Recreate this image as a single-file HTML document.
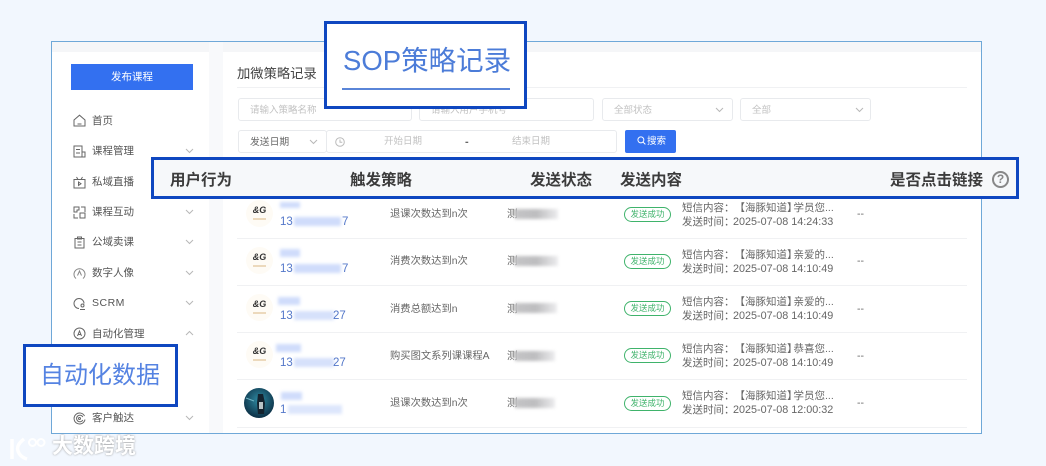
<!DOCTYPE html>
<html lang="zh"><head><meta charset="utf-8"><title>SOP策略记录</title>
<style>
*{box-sizing:border-box;margin:0;padding:0}
html,body{width:1046px;height:466px;overflow:hidden;background:#f2f7fe;font-family:"Liberation Sans","Noto Sans CJK SC",sans-serif;color:#555}
#w{position:absolute;left:0;top:0;width:1046px;height:466px;filter:blur(.35px)}
.a{position:absolute;white-space:nowrap}
.panel{left:51px;top:41px;width:931px;height:393px;border:1px solid #6fa8d8;background:#fff}
.in{position:absolute;background:#fff;border:1px solid #e8eaed;border-radius:3px;font-size:9.5px;color:#c2c2c2;line-height:23px}
.m{position:absolute;left:92px;font-size:10.5px;color:#555;line-height:14px;white-space:nowrap}
.ic{position:absolute;left:73px;width:13px;height:13px;fill:none;stroke:#666;stroke-width:1}
.ch{position:absolute;left:185px;width:9px;height:6px;fill:none;stroke:#b8b8b8;stroke-width:1}
.sep{position:absolute;left:237px;width:730px;height:1px;background:#f0f1f3}
.t{position:absolute;font-size:10.5px;color:#666;line-height:14px;white-space:nowrap;text-spacing-trim:space-all}
.t i{font-style:normal;letter-spacing:-4px}
.t u{text-decoration:none;font-size:10.8px;margin-left:-1.5px}
.ph{position:absolute;left:280px;font-size:11.5px;color:#5377c9;line-height:14px;white-space:nowrap}
.bl{position:absolute;background:#cfdcfb;filter:blur(1.5px)}
.gr{position:absolute;height:10px;left:515px;background:linear-gradient(90deg,#c4c4c6,#bdbdbf 50%,#ececee);filter:blur(1.5px)}
.bd{position:absolute;left:624px;width:47px;height:15px;border:1px solid #3fb36b;border-radius:8px;color:#3fb36b;font-size:8.5px;line-height:13px;text-align:center;white-space:nowrap}
.av{position:absolute;left:246px;width:27px;height:27px;border-radius:50%;background:#fefbf5;text-align:center;font-size:9px;font-weight:bold;font-style:italic;color:#333;line-height:21px}
.av i{position:absolute;left:7px;top:18px;width:13px;height:1.5px;background:#ecd9bc}
.hd{position:absolute;top:172px;font-size:15.5px;font-weight:bold;color:#3c3c3c;line-height:18px;white-space:nowrap}
</style></head><body><div id="w">
<div class="a panel"></div>
<div class="a" style="left:52px;top:42px;width:929px;height:10px;background:#f5f6f8"></div>
<div class="a" style="left:209px;top:42px;width:14px;height:391px;background:#f8f9fb"></div>
<div class="a" style="left:71px;top:64px;width:122px;height:26px;background:#3370f0;color:#fff;font-size:10.5px;line-height:27px;text-align:center">发布课程</div>

<svg class="ic" style="top:114px" viewBox="0 0 13 13"><path d="M1 6L6.5 1.2 12 6v6H1zM4.5 10h4"/></svg><div class="m" style="top:114px">首页</div>
<svg class="ic" style="top:145px" viewBox="0 0 13 13"><path d="M9 12H1V1h8zM3 4.5h4M3 8h4M9 7h3v5H9"/></svg><div class="m" style="top:144px">课程管理</div>
<svg class="ic" style="top:176px" viewBox="0 0 13 13"><path d="M1 3.5h11V12H1zM3.5 1l1.5 2.5M9.5 1L8 3.5M5.5 6l2.500 1.700-2.500 1.700z"/></svg><div class="m" style="top:175px">私域直播</div>
<svg class="ic" style="top:206px" viewBox="0 0 13 13"><path d="M1 1h5v3H4v2H1zM8 1h4v5M1 8v4h4M7 7h5v5H7z"/></svg><div class="m" style="top:205px">课程互动</div>
<svg class="ic" style="top:236px" viewBox="0 0 13 13"><path d="M2 2.5h9V12H2zM4.5 1h4v2h-4zM4.500 6h4M4.500 9h4"/></svg><div class="m" style="top:235px">公域卖课</div>
<svg class="ic" style="top:267px;stroke:#888" viewBox="0 0 13 13"><path d="M3 11.500A5.500 5.500 0 1 1 10 11.500M4.500 8.500L6.500 4l2 4.500"/></svg><div class="m" style="top:266px">数字人像</div>
<svg class="ic" style="top:297px" viewBox="0 0 13 13"><path d="M6 11.500A5 5 0 1 1 11 6.500"/><circle cx="9.500" cy="8.500" r="1.500"/><path d="M7 12.500h5"/></svg><div class="m" style="top:296px;letter-spacing:.5px">SCRM</div>
<svg class="ic" style="top:327px" viewBox="0 0 13 13"><circle cx="6.500" cy="6.500" r="5.500"/><path d="M4.500 9l2-5 2 5M5.200 7.500h2.600"/></svg><div class="m" style="top:327px">自动化管理</div>
<svg class="ic" style="top:412px" viewBox="0 0 13 13"><path d="M11.500 4A5.500 5.500 0 1 0 12 7.500M9.800 5A3.300 3.300 0 1 0 9.800 8"/><circle cx="6.500" cy="6.500" r="1"/></svg><div class="m" style="top:411px">客户触达</div>

<svg class="ch" style="top:148px" viewBox="0 0 9 6"><path d="M1 1l3.500 3.500L8 1"/></svg>
<svg class="ch" style="top:209px" viewBox="0 0 9 6"><path d="M1 1l3.500 3.500L8 1"/></svg>
<svg class="ch" style="top:239px" viewBox="0 0 9 6"><path d="M1 1l3.500 3.500L8 1"/></svg>
<svg class="ch" style="top:270px" viewBox="0 0 9 6"><path d="M1 1l3.500 3.500L8 1"/></svg>
<svg class="ch" style="top:300px" viewBox="0 0 9 6"><path d="M1 1l3.500 3.500L8 1"/></svg>
<svg class="ch" style="top:330px" viewBox="0 0 9 6"><path d="M1 5l3.500-3.500L8 5"/></svg>
<svg class="ch" style="top:415px" viewBox="0 0 9 6"><path d="M1 1l3.500 3.500L8 1"/></svg>

<div class="a" style="left:237px;top:65px;font-size:13.3px;color:#444;line-height:17px">加微策略记录</div>
<div class="sep" style="top:87px"></div>

<div class="in" style="left:238px;top:98px;width:174px;height:23px;padding-left:11px">请输入策略名称</div>
<div class="in" style="left:419px;top:98px;width:175px;height:23px;padding-left:11px">请输入用户手机号</div>
<div class="in" style="left:602px;top:98px;width:131px;height:23px;padding-left:11px">全部状态</div>
<svg class="ch" style="left:715px;top:107px" viewBox="0 0 9 6"><path d="M1 1l3.500 3.500L8 1"/></svg>
<div class="in" style="left:740px;top:98px;width:131px;height:23px;padding-left:11px">全部</div>
<svg class="ch" style="left:855px;top:107px" viewBox="0 0 9 6"><path d="M1 1l3.500 3.500L8 1"/></svg>
<div class="in" style="left:238px;top:130px;width:89px;height:23px;padding-left:11px;color:#666;font-size:9.800px">发送日期</div>
<svg class="ch" style="left:309px;top:139px" viewBox="0 0 9 6"><path d="M1 1l3.500 3.500L8 1"/></svg>
<div class="in" style="left:326px;top:130px;width:291px;height:23px"></div>
<svg class="a" style="left:335px;top:137px;width:10px;height:10px;fill:none;stroke:#bbb" viewBox="0 0 10 10"><circle cx="5" cy="5" r="4.300"/><path d="M5 2.500V5.300H7.300"/></svg>
<div class="a" style="left:384px;top:135px;font-size:9.500px;color:#c2c2c2;line-height:14px">开始日期</div>
<div class="a" style="left:465px;top:135px;font-size:11px;font-weight:bold;color:#666;line-height:14px">-</div>
<div class="a" style="left:512px;top:135px;font-size:9.500px;color:#c2c2c2;line-height:14px">结束日期</div>
<div class="a" style="left:625px;top:130px;width:51px;height:23px;background:#3370f0;border-radius:2px;color:#fff;font-size:9.500px;line-height:24px;padding-left:22px">搜索</div>
<svg class="a" style="left:637px;top:136px;width:9px;height:9px;fill:none;stroke:#fff;stroke-width:1.100" viewBox="0 0 10 10"><circle cx="4.300" cy="4.300" r="3.300"/><path d="M6.800 6.800L9.300 9.300"/></svg>

<!-- rows -->
<div class="av" style="top:200px">&amp;G<i></i></div>
<div class="av" style="top:247px">&amp;G<i></i></div>
<div class="av" style="top:294px">&amp;G<i></i></div>
<div class="av" style="top:341px">&amp;G<i></i></div>
<svg class="a" style="left:244px;top:388px;width:30px;height:30px" viewBox="0 0 30 30"><defs><radialGradient id="g" cx=".5" cy=".4" r=".6"><stop offset="0" stop-color="#2f8ba3"/><stop offset="1" stop-color="#0c2f45"/></radialGradient></defs><circle cx="15" cy="15" r="15" fill="url(#g)"/><path d="M14 6h5l2 9-1 11h-6l-1-11z" fill="#14222e"/><rect x="15" y="14" width="4" height="7" fill="#b9c3c6"/><path d="M2 10l8 3" stroke="#6fb4c4"/></svg>

<div class="bl" style="left:280px;top:202px;width:20px;height:6px"></div>
<div class="ph" style="top:215px">13</div><div class="bl" style="left:294px;top:217px;width:47px;height:9px"></div><div class="ph" style="left:342px;top:215px">7</div>
<div class="bl" style="left:280px;top:249px;width:20px;height:8px"></div>
<div class="ph" style="top:262px">13</div><div class="bl" style="left:294px;top:264px;width:47px;height:9px"></div><div class="ph" style="left:342px;top:262px">7</div>
<div class="bl" style="left:278px;top:297px;width:22px;height:8px"></div>
<div class="ph" style="top:309px">13</div><div class="bl" style="left:294px;top:311px;width:40px;height:9px;background:#d6e1fb"></div><div class="ph" style="left:333px;top:309px">27</div>
<div class="bl" style="left:276px;top:344px;width:25px;height:8px"></div>
<div class="ph" style="top:356px">13</div><div class="bl" style="left:294px;top:358px;width:40px;height:9px;background:#d6e1fb"></div><div class="ph" style="left:333px;top:356px">27</div>
<div class="bl" style="left:281px;top:392px;width:21px;height:8px"></div>
<div class="ph" style="top:403px">1</div><div class="bl" style="left:288px;top:405px;width:54px;height:9px;background:#dde6fc"></div>

<div class="t" style="left:390px;top:208px;font-size:10.3px">退课次数达到n次</div>
<div class="t" style="left:390px;top:255px;font-size:10.3px">消费次数达到n次</div>
<div class="t" style="left:390px;top:303px;font-size:10.3px">消费总额达到n</div>
<div class="t" style="left:390px;top:350px;font-size:10.3px">购买图文系列课课程A</div>
<div class="t" style="left:390px;top:397px;font-size:10.3px">退课次数达到n次</div>

<div class="t" style="left:507px;top:207px">测</div><div class="gr" style="top:209px;width:43px"></div>
<div class="t" style="left:507px;top:254px">测</div><div class="gr" style="top:256px;width:43px"></div>
<div class="t" style="left:507px;top:302px">测</div><div class="gr" style="top:303px;width:42px"></div>
<div class="t" style="left:507px;top:349px">测</div><div class="gr" style="top:351px;width:40px"></div>
<div class="t" style="left:507px;top:396px">测</div><div class="gr" style="top:398px;width:40px"></div>

<div class="bd" style="top:207px">发送成功</div>
<div class="bd" style="top:254px">发送成功</div>
<div class="bd" style="top:301px">发送成功</div>
<div class="bd" style="top:348px">发送成功</div>
<div class="bd" style="top:396px">发送成功</div>

<div class="t" style="left:682px;top:201px">短信内容：【海豚知道<i>】</i>学员您...</div><div class="t" style="left:682px;top:215px">发送时间：<u>2025-07-08 14:24:33</u></div>
<div class="t" style="left:682px;top:248px">短信内容：【海豚知道<i>】</i>亲爱的...</div><div class="t" style="left:682px;top:262px">发送时间：<u>2025-07-08 14:10:49</u></div>
<div class="t" style="left:682px;top:295px">短信内容：【海豚知道<i>】</i>亲爱的...</div><div class="t" style="left:682px;top:309px">发送时间：<u>2025-07-08 14:10:49</u></div>
<div class="t" style="left:682px;top:342px">短信内容：【海豚知道<i>】</i>恭喜您...</div><div class="t" style="left:682px;top:356px">发送时间：<u>2025-07-08 14:10:49</u></div>
<div class="t" style="left:682px;top:389px">短信内容：【海豚知道<i>】</i>学员您...</div><div class="t" style="left:682px;top:403px">发送时间：<u>2025-07-08 12:00:32</u></div>

<div class="t" style="left:857px;top:207px">--</div>
<div class="t" style="left:857px;top:254px">--</div>
<div class="t" style="left:857px;top:302px">--</div>
<div class="t" style="left:857px;top:349px">--</div>
<div class="t" style="left:857px;top:396px">--</div>

<div class="sep" style="top:238px"></div>
<div class="sep" style="top:285px"></div>
<div class="sep" style="top:332px"></div>
<div class="sep" style="top:379px"></div>
<div class="sep" style="top:427px"></div>

<!-- highlight header -->
<div class="a" style="left:151px;top:157px;width:868px;height:42px;background:#f6f8fa;border:3px solid #0f47c0"></div>
<div class="hd" style="left:170px">用户行为</div>
<div class="hd" style="left:350px">触发策略</div>
<div class="hd" style="left:530px">发送状态</div>
<div class="hd" style="left:620px">发送内容</div>
<div class="hd" style="left:890px">是否点击链接</div>
<div class="a" style="left:992px;top:171px;width:17px;height:17px;border:2px solid #888;border-radius:50%;color:#888;font-size:12px;font-weight:bold;line-height:13px;text-align:center">?</div>

<!-- SOP box -->
<div class="a" style="left:324px;top:21px;width:203px;height:88px;background:#fff;border:3px solid #0f47c0"></div>
<div class="a" style="left:343px;top:42px;font-size:27.5px;line-height:38px;color:#4c7cd8">SOP策略记录</div>
<div class="a" style="left:342px;top:88px;width:168px;height:2px;background:#5a85d8"></div>

<!-- automation box -->
<div class="a" style="left:23px;top:344px;width:155px;height:63px;background:#fff;border:3px solid #0f47c0"></div>
<div class="a" style="left:40px;top:360px;font-size:24px;line-height:32px;color:#5583e2">自动化数据</div>

<!-- watermark -->
<svg class="a" style="left:9px;top:436px;width:38px;height:26px;fill:none;stroke:#fff" viewBox="0 0 38 26"><path d="M3 3v20M15 3Q7 9 9 15T18 23" stroke-width="3.500"/><circle cx="23.500" cy="6.500" r="3.500" stroke-width="2"/><circle cx="32" cy="6.500" r="3.500" stroke-width="2"/></svg>
<div class="a" style="left:52px;top:434px;font-size:21px;line-height:26px;font-weight:bold;color:#fff;text-shadow:0 0 2px #999">大数跨境</div>
</div></body></html>
